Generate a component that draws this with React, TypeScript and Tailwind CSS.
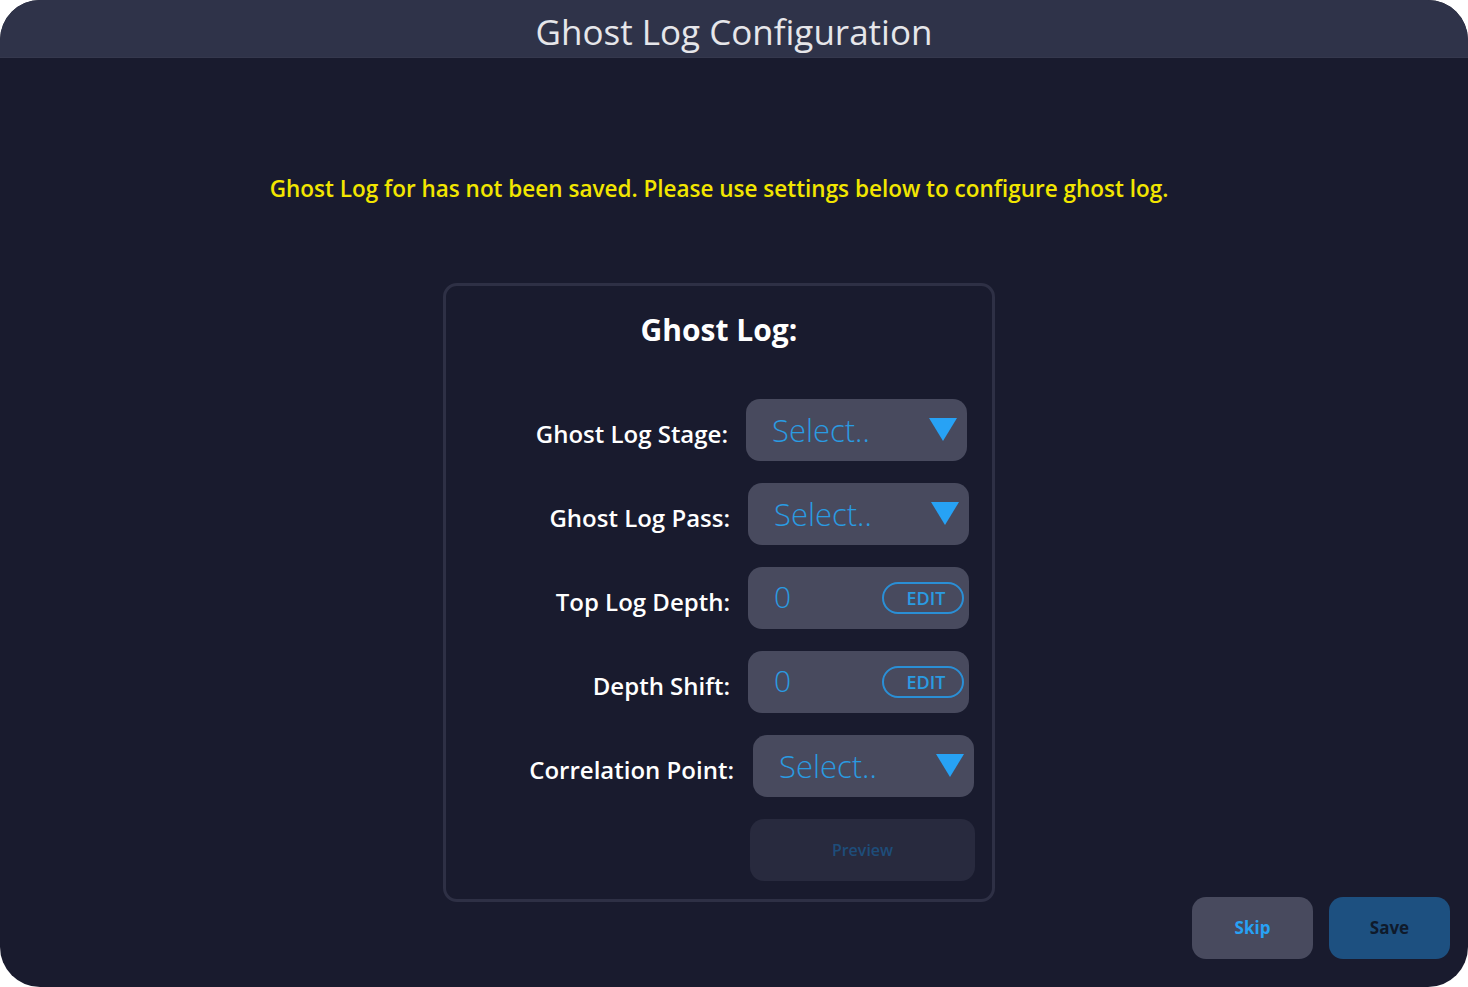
import React from "react";

const font = { fontFamily: '"Open Sans", "Noto Sans", sans-serif' };

const Caret = () => (
	<svg width="28" height="24" viewBox="0 0 28 24" className="shrink-0">
		<polygon points="0,0 28,0 14,23" fill="#27a2f5" />
	</svg>
);

interface SelectBoxProps {
	shift?: string;
}

const SelectBox: React.FC<SelectBoxProps> = ({ shift = "" }) => (
	<div className={`flex h-[62px] w-[221px] items-center justify-between rounded-[14px] bg-[#484a5e] pl-[26px] pr-[10px] ${shift}`}>
		<span className="text-[31px] font-light leading-none text-[#2a9be2]">Select..</span>
		<Caret />
	</div>
);

const EditBox: React.FC = () => (
	<div className="flex h-[62px] w-[221px] items-center justify-between rounded-[14px] bg-[#484a5e] pl-[26px] pr-[5px]">
		<span className="-mt-[3px] text-[30px] font-light leading-none text-[#2a9be2]">0</span>
		<span className="flex h-[32px] w-[82px] items-center justify-center rounded-full border-2 border-[#2a8fd6] pl-[6px] text-[18px] font-semibold text-[#2a9be2]">
			EDIT
		</span>
	</div>
);

const rows: { label: string; kind: "select" | "edit"; shift?: string; labelShift?: string }[] = [
	{ label: "Ghost Log Stage:", kind: "select", shift: "-ml-[2px]", labelShift: "mr-[2px]" },
	{ label: "Ghost Log Pass:", kind: "select" },
	{ label: "Top Log Depth:", kind: "edit" },
	{ label: "Depth Shift:", kind: "edit" },
	{ label: "Correlation Point:", kind: "select", shift: "ml-[5px]", labelShift: "-mr-[4px]" },
];

export default function App() {
	return (
		<div className="h-[987px] w-[1468px] bg-white" style={font}>
			<div className="flex h-full flex-col overflow-hidden rounded-[40px] bg-[#191b2e]">
				<div className="flex h-[58px] shrink-0 items-center justify-center border-b border-[#35384d] bg-[#2f3349] pt-[6px]">
					<h1 className="text-[35px] font-normal leading-none text-[#e6e6ea]">Ghost Log Configuration</h1>
				</div>

				<div className="flex flex-1 flex-col pr-[30px]">
					<p className="mt-[116px] text-center text-[22.5px] font-semibold leading-[30px] text-[#f2e600]">
						Ghost Log for has not been saved. Please use settings below to configure ghost log.
					</p>

					<div className="mx-auto mt-[79px] flex w-[552px] flex-col rounded-[14px] border-[3px] border-[#2e3045] pb-[18px]">
						<h2 className="mt-[29px] text-center text-[30px] font-bold leading-none text-white">Ghost Log:</h2>

						<div className="mt-[54px] flex flex-col gap-[22px]">
							{rows.map((row) => (
								<div key={row.label} className="grid grid-cols-[284px_1fr] items-center gap-[18px]">
									<span className={`mt-[8px] text-right text-[24px] font-semibold leading-none text-white ${row.labelShift ?? ""}`}>
										{row.label}
									</span>
									{row.kind === "select" ? <SelectBox shift={row.shift} /> : <EditBox />}
								</div>
							))}

							<div className="grid grid-cols-[284px_1fr] gap-[18px]">
								<span />
								<button className="ml-[2px] h-[62px] w-[225px] rounded-[14px] bg-[#282a3e] text-[16px] font-semibold text-[#1e4d7a]">
									Preview
								</button>
							</div>
						</div>
					</div>

					<div className="-mt-[5px] flex justify-end gap-[16px]">
						<button className="h-[62px] w-[121px] rounded-[14px] bg-[#484a5e] text-[17px] font-bold text-[#27a2f5]">Skip</button>
						<button className="-mr-[12px] h-[62px] w-[121px] rounded-[14px] bg-[#1d5080] text-[17px] font-bold text-[#0f1a2b]">Save</button>
					</div>
				</div>
			</div>
		</div>
	);
}
